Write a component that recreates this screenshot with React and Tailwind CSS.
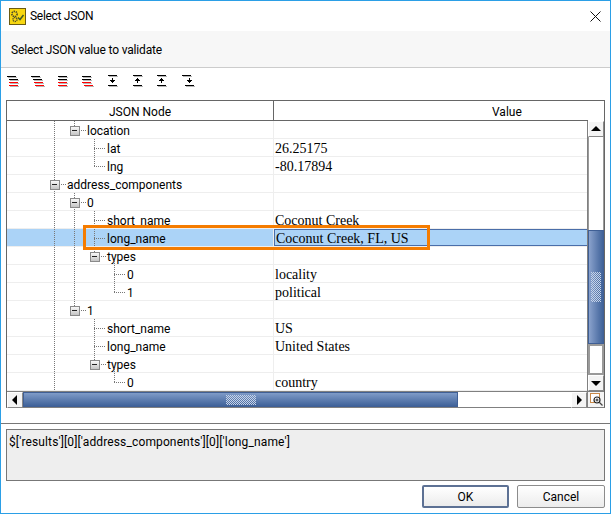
import React from 'react';

const rows = [
  { pad: 'pl-[80px]', name: 'location' },
  { pad: 'pl-[100px]', name: 'lat', value: '26.25175' },
  { pad: 'pl-[100px]', name: 'lng', value: '-80.17894' },
  { pad: 'pl-[60px]', name: 'address_components' },
  { pad: 'pl-[80px]', name: '0' },
  { pad: 'pl-[100px]', name: 'short_name', value: 'Coconut Creek' },
  { pad: 'pl-[100px]', name: 'long_name', value: 'Coconut Creek, FL, US', selected: true },
  { pad: 'pl-[100px]', name: 'types' },
  { pad: 'pl-[120px]', name: '0', value: 'locality' },
  { pad: 'pl-[120px]', name: '1', value: 'political' },
  { pad: 'pl-[80px]', name: '1' },
  { pad: 'pl-[100px]', name: 'short_name', value: 'US' },
  { pad: 'pl-[100px]', name: 'long_name', value: 'United States' },
  { pad: 'pl-[100px]', name: 'types' },
  { pad: 'pl-[120px]', name: '0', value: 'country' },
];

// indent icons: x offset of each of the four lines
const indentIcons = [
  { ml: 'ml-0', xs: [0, 2, 2, 2] },
  { ml: 'ml-[8px]', xs: [0, 2, 3, 4] },
  { ml: 'ml-[11px]', xs: [0, 0, 0, 0] },
  { ml: 'ml-[8px]', xs: [0, 0, 0, 2] },
];

const LineIcon = ({ xs, className }) => (
  <svg className={className} width="16" height="16" viewBox="0 0 16 16" shapeRendering="crispEdges">
    {xs.map((x, i) => (
      <rect key={'s' + i} x={x + 1} y={4 + i * 3} width="9" height="1" fill="#b5b5b5" />
    ))}
    {xs.map((x, i) => (
      <rect key={i} x={x} y={3 + i * 3} width="9" height="1" fill={i < 2 ? '#000' : '#f00'} />
    ))}
  </svg>
);

const ArrowIcon = ({ up, botX = 0, className }) => (
  <svg className={className} width="16" height="16" viewBox="0 0 16 16" shapeRendering="crispEdges">
    <rect x="1" y="3" width="9" height="1" fill="#b5b5b5" />
    <rect x={botX + 1} y="13" width="9" height="1" fill="#b5b5b5" />
    <rect x="0" y="2" width="9" height="1" fill="#000" />
    <rect x={botX} y="12" width="9" height="1" fill="#000" />
    <g transform={botX ? 'translate(3 0)' : undefined}>
      {up ? (
        <path d="M4 5h1v1h1v1h1v1h-2v2h-1v-2h-2v-1h1v-1h1z" fill="#000" />
      ) : (
        <path d="M4 5h1v2h2v1h-1v1h-1v1h-1v-1h-1v-1h-1v-1h2z" fill="#000" />
      )}
    </g>
  </svg>
);

const Box = ({ x, y }) => (
  <g shapeRendering="crispEdges">
    <rect x={x - 4} y={y - 4} width="9" height="9" fill="url(#boxfill)" stroke="#8a8a8a" />
    <rect x={x - 2} y={y} width="5" height="1" fill="#222" />
  </g>
);

const TreeLines = () => {
  const v = [
    [54, 121, 391],
    [74, 121, 126],
    [74, 193, 306],
    [94, 139, 166],
    [94, 211, 252],
    [114, 261, 292],
    [94, 319, 360],
    [114, 369, 382],
  ];
  const h = [
    [94, 106, 148], [94, 106, 166], [79, 86, 130], [59, 66, 184], [79, 86, 202],
    [94, 106, 220], [94, 106, 238], [99, 106, 256], [114, 126, 274], [114, 126, 292],
    [79, 86, 310], [94, 106, 328], [94, 106, 346], [99, 106, 364], [114, 126, 382],
  ];
  return (
    <svg className="absolute left-0 top-0" width="267" height="270" viewBox="7 121 267 270">
      <defs>
        <linearGradient id="boxfill" x1="0" y1="0" x2="0" y2="1">
          <stop offset="0" stopColor="#ffffff" />
          <stop offset="1" stopColor="#c4c4c4" />
        </linearGradient>
      </defs>
      <g stroke="#777" strokeDasharray="1 1" shapeRendering="crispEdges">
        {v.map(([x, a, b], i) => (
          <line key={i} x1={x + 0.5} x2={x + 0.5} y1={a} y2={b} />
        ))}
        {h.map(([a, b, y], i) => (
          <line key={i} x1={a} x2={b} y1={y + 0.5} y2={y + 0.5} />
        ))}
      </g>
      <Box x={74} y={130} />
      <Box x={54} y={184} />
      <Box x={74} y={202} />
      <Box x={94} y={256} />
      <Box x={74} y={310} />
      <Box x={94} y={364} />
    </svg>
  );
};

const ScrollBtn = ({ dir }) => {
  const d = { up: 'M3 10 8 5l5 5z', down: 'M3 6l5 5 5-5z', left: 'M10 3 5 8l5 5z', right: 'M6 3l5 5-5 5z' }[dir];
  return (
    <div className="w-[16px] h-[16px] shrink-0 bg-[#f4f4f4] border border-t-[#fff] border-l-[#fff] border-r-[#888] border-b-[#888]">
      <svg width="14" height="14" viewBox="1 1 14 14"><path d={d} fill="#000" /></svg>
    </div>
  );
};

const Grip = ({ w, h }) => (
  <svg width={w} height={h} shapeRendering="crispEdges">
    <defs>
      <pattern id={'grip' + w} width="2" height="2" patternUnits="userSpaceOnUse">
        <rect width="1" height="1" fill="#c6d3e8" />
        <rect x="1" y="1" width="1" height="1" fill="#c6d3e8" />
      </pattern>
    </defs>
    <rect width={w} height={h} fill={'url(#grip' + w + ')'} />
  </svg>
);

export default function App() {
  return (
    <div className="w-[611px] h-[514px] bg-white border border-[#2b9fe6] flex flex-col overflow-hidden relative text-[12px] text-black font-['Roboto',sans-serif]">
      {/* Title bar */}
      <div className="h-[30px] flex items-center pl-[8px] pr-[9px] shrink-0">
        <svg width="17" height="17" viewBox="0 0 17 17">
          <rect x="0.5" y="0.5" width="16" height="16" fill="#f7d711" stroke="#6b5b12" />
          <circle cx="5.5" cy="6" r="2.6" fill="none" stroke="#4b4b2a" strokeWidth="1.6" strokeDasharray="1.4 0.8" />
          <circle cx="6" cy="11.5" r="2" fill="none" stroke="#4b4b2a" strokeWidth="1.4" strokeDasharray="1.2 0.7" />
          <path d="M9 9.5l2 2 3.5-4.5" fill="none" stroke="#3f5a2a" strokeWidth="1.5" />
        </svg>
        <span className="ml-[4px] flex-1 tracking-[-0.3px]">Select JSON</span>
        <svg width="11" height="11" viewBox="0 0 11 11"><path d="M0.5 0.5l10 10M10.5 0.5l-10 10" stroke="#111" strokeWidth="1" /></svg>
      </div>

      {/* Instruction band */}
      <div className="h-[37px] shrink-0 bg-[#f7f7f7] border-b border-[#cccccc] flex items-center pl-[10px] pt-[2px] tracking-[-0.17px]">
        Select JSON value to validate
      </div>

      {/* Toolbar */}
      <div className="h-[32px] shrink-0 flex items-start pt-[5px] pl-[6px]">
        {indentIcons.map((icon, i) => <LineIcon key={i} xs={icon.xs} className={icon.ml} />)}
        <ArrowIcon className="ml-[10px]" />
        <ArrowIcon up className="ml-[9px]" />
        <ArrowIcon up className="ml-[8px]" />
        <ArrowIcon botX={3} className="ml-[9px]" />
      </div>

      {/* Tree */}
      <div className="mx-[5px] h-[308px] shrink-0 border border-[#666666] border-b-[#808080] flex flex-col">
        <div className="h-[20px] shrink-0 flex">
          <div className="w-[267px] border-r border-b border-[#666666] text-center leading-[22px]">JSON Node</div>
          <div className="w-[314px] border-b border-[#666666] pl-[218px] leading-[22px]">Value</div>
        </div>
        <div className="h-[270px] shrink-0 flex overflow-hidden">
          <div className="w-[581px] relative">
            {rows.map((r, i) => (
              <div key={i} className="h-[18px] flex border-b border-[#eeeeee]">
                <div className={`w-[267px] h-[17px] border-r border-[#eeeeee] leading-[20px] whitespace-nowrap ${r.pad} ${r.selected ? 'bg-[#abd3f7]' : ''}`}>
                  {r.name}
                </div>
                <div className={`flex-1 h-[17px] pl-[1px] font-['Liberation_Serif',serif] text-[14px] ${r.selected ? 'leading-[17px] bg-[#abd3f7] border border-r-0 border-[#4a6ea9]' : 'leading-[19px]'}`}>
                  {r.value}
                </div>
              </div>
            ))}
            <TreeLines />
          </div>
          <div className="w-[17px] shrink-0 border-l border-[#808080] flex flex-col bg-white">
            <ScrollBtn dir="up" />
            <div className="h-[93px] shrink-0 border-x border-[#9a9a9a]" />
            <div className="h-[114px] shrink-0 border border-[#3f5f95] bg-gradient-to-r from-[#8aa2cc] to-[#3f6299] pt-[41px] flex justify-center">
              <Grip w={10} h={30} />
            </div>
            <div className="flex-1 border-2 border-[#9a9a9a]" />
            <ScrollBtn dir="down" />
          </div>
        </div>
        <div className="h-[16px] shrink-0 flex border-t border-[#808080]">
          <ScrollBtn dir="left" />
          <div className="w-[435px] shrink-0 border border-[#3f5f95] bg-gradient-to-b from-[#7f9bc8] to-[#3f6299] flex items-center justify-center">
            <Grip w={30} h={10} />
          </div>
          <div className="flex-1" />
          <ScrollBtn dir="right" />
          <div className="w-[17px] shrink-0 border-l border-[#808080] bg-[#f4f4f4] flex items-center justify-center">
            <svg width="13" height="13" viewBox="0 0 13 13">
              <rect x="0.5" y="0.5" width="9" height="9" fill="#fff" stroke="#c98a4a" />
              <circle cx="7" cy="7" r="3" fill="#fff" stroke="#222" strokeWidth="1.2" />
              <path d="M7 5.5v3M5.5 7h3" stroke="#222" />
              <path d="M9.5 9.5l3 3" stroke="#444" strokeWidth="1.2" />
            </svg>
          </div>
        </div>
      </div>

      <div className="h-px bg-[#777777] mt-[15px] shrink-0" />

      {/* JSON path */}
      <div className="mx-[5px] mt-[5px] h-[52px] shrink-0 bg-[#eeeeee] border border-[#777777] pl-[2px] pt-[3px] tracking-[0.13px]">
        $['results'][0]['address_components'][0]['long_name']
      </div>

      {/* Buttons */}
      <div className="flex justify-end gap-[8px] mt-[4px] pr-[5px]">
        <button className="w-[87px] h-[23px] rounded-[2px] border-2 border-[#5d7194] bg-gradient-to-b from-white to-[#ececec]">OK</button>
        <button className="w-[88px] h-[23px] rounded-[2px] border border-[#8c8c8c] bg-gradient-to-b from-white to-[#ececec]">Cancel</button>
      </div>

      {/* Callout around the selected row */}
      <div className="absolute left-[82px] top-[224px] w-[347px] h-[25px] border-[3px] border-[#f57c00]" />
    </div>
  );
}
